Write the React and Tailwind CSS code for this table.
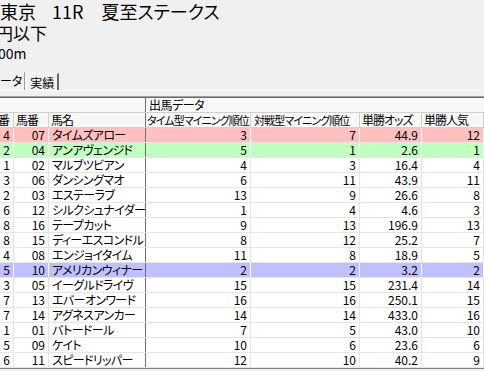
const rows = [
  ['4', '07', 'タイムズアロー', '3', '7', '44.9', '12', 'pink'],
  ['2', '04', 'アンアヴェンジド', '5', '1', '2.6', '1', 'green'],
  ['1', '02', 'マルブツビアン', '4', '3', '16.4', '4'],
  ['3', '06', 'ダンシングマオ', '6', '11', '43.9', '11'],
  ['2', '03', 'エステーラブ', '13', '9', '26.6', '8'],
  ['6', '12', 'シルクシュナイダー', '1', '4', '4.6', '3'],
  ['8', '16', 'テープカット', '9', '13', '196.9', '13'],
  ['8', '15', 'ディーエスコンドル', '8', '12', '25.2', '7'],
  ['4', '08', 'エンジョイタイム', '11', '8', '18.9', '5'],
  ['5', '10', 'アメリカンウィナー', '2', '2', '3.2', '2', 'blue'],
  ['3', '05', 'イーグルドライヴ', '15', '15', '231.4', '14'],
  ['7', '13', 'エバーオンワード', '16', '16', '250.1', '15'],
  ['7', '14', 'アグネスアンカー', '14', '14', '433.0', '16'],
  ['1', '01', 'バトードール', '7', '5', '43.0', '10'],
  ['5', '09', 'ケイト', '10', '6', '23.6', '6'],
  ['6', '11', 'スピードリッパー', '12', '10', '40.2', '9'],
];

const rowBg = {
  pink: 'bg-[#ffc0c0]',
  green: 'bg-[#c0ffc0]',
  blue: 'bg-[#c0c0ff]',
};

function DataRow({ r }) {
  const bg = rowBg[r[7]] || 'bg-white';
  // coloured rows show white grid lines, white rows faint grey
  const line = r[7] ? 'border-r-white' : 'border-r-[#e4e4e4]';
  const num = `h-full border-r ${line} text-right pr-[3px]`;
  return (
    <div className={`flex h-[15px] leading-[14px] border-b border-b-[#e6e6e6] ${bg}`}>
      <div className={`w-[34px] ${num}`}>{r[0]}</div>
      <div className={`w-[35px] ${num}`}>{r[1]}</div>
      <div className="w-[97px] h-full border-r border-r-[#707070] pl-[3px] tracking-[-0.6px] whitespace-nowrap">{r[2]}</div>
      <div className={`w-[105px] ${num}`}>{r[3]}</div>
      <div className={`w-[109px] ${num}`}>{r[4]}</div>
      <div className={`w-[62px] ${num}`}>{r[5]}</div>
      <div className={`w-[62px] ${num}`}>{r[6]}</div>
    </div>
  );
}

export default function App() {
  return (
    <div
      className="w-[484px] h-[371px] overflow-hidden bg-[#f0f0f0] text-black [font-feature-settings:'palt']"
      style={{ fontFamily: '"Noto Sans CJK JP", "Noto Sans", sans-serif' }}
    >
      {/* Race info */}
      <div className="pt-[1px] text-[18px] leading-[21px] whitespace-nowrap">
        <div className="flex">
          <span>東京</span>
          <span className="ml-[16px]">11R</span>
          <span className="ml-[18px]">夏至ステークス</span>
        </div>
        <div className="-ml-[4px] text-[17px]">円以下</div>
        <div className="-ml-[2px] text-[14px]">00m</div>
      </div>

      {/* Tabs */}
      <div className="flex h-[19px] mt-[7px] text-[12px] leading-[16px] items-end">
        <div className="pr-[2px] h-[18px] pt-[1px]">ータ</div>
        <div className="h-[18px] w-[1px] bg-[#a0a0a0]" />
        <div className="h-[17px] ml-[1px] px-[3px] border-t border-l border-t-white border-l-white border-r-2 border-r-[#696969] pt-[1px]">実績</div>
      </div>
      <div className="h-[1px] bg-white" />
      <div className="h-[5px]" />
      <div className="h-[1px] bg-[#a0a0a0]" />
      <div className="h-[1px] bg-[#696969]" />

      {/* Grid */}
      <div className="-ml-[20px] text-[12px]">
        <div className="flex h-[15px] leading-[14px] bg-[#f7f7f7] border-b border-b-[#d0d0d0]">
          <div className="w-[166px] h-full border-r border-r-[#707070]" />
          <div className="flex-1 pl-[3px] tracking-[-0.5px]">出馬データ</div>
        </div>
        <div className="flex h-[15px] leading-[14px] bg-[#f7f7f7] border-b border-b-[#d0d0d0] whitespace-nowrap tracking-[-1px] overflow-hidden">
          <div className="w-[34px] h-full border-r border-r-[#d0d0d0] text-right pr-[4px]">枠番</div>
          <div className="w-[35px] h-full border-r border-r-[#d0d0d0] pl-[2px]">馬番</div>
          <div className="w-[97px] h-full border-r border-r-[#707070] pl-[2px]">馬名</div>
          <div className="w-[105px] h-full border-r border-r-[#d0d0d0] pl-[1px] text-[11px] tracking-[-0.9px] overflow-hidden">タイム型マイニング順位</div>
          <div className="w-[109px] h-full border-r border-r-[#d0d0d0] pl-[3px] text-[11px] tracking-[-0.9px] overflow-hidden">対戦型マイニング順位</div>
          <div className="w-[62px] h-full border-r border-r-[#d0d0d0] pl-[2px]">単勝オッズ</div>
          <div className="w-[62px] h-full border-r border-r-[#d0d0d0] pl-[2px]">単勝人気</div>
        </div>
        {rows.map((r) => (
          <DataRow key={r[1]} r={r} />
        ))}
        <div className="h-[1px] bg-[#808080]" />
      </div>
    </div>
  );
}
